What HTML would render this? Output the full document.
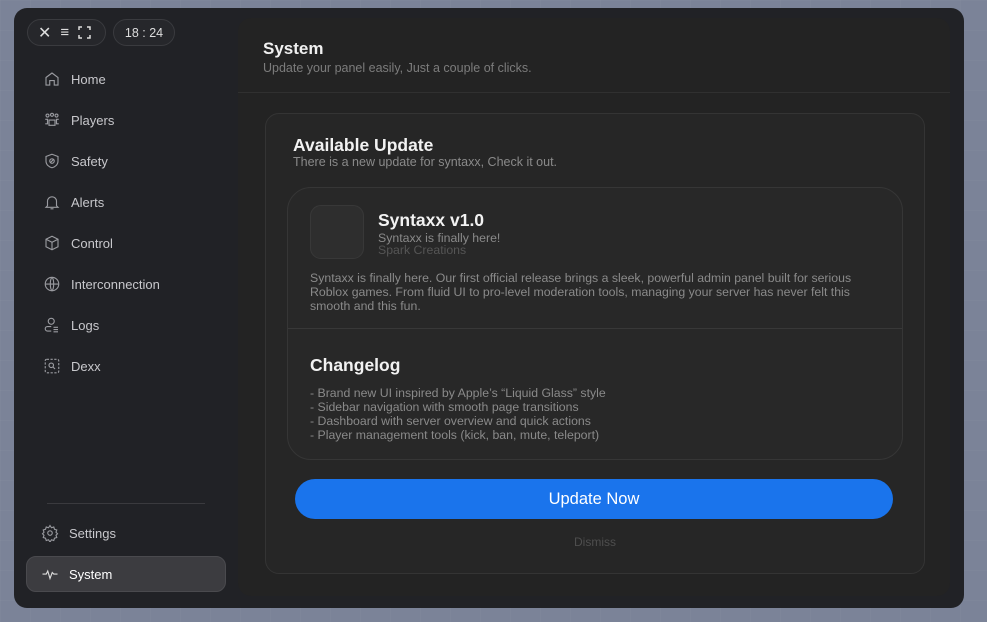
<!DOCTYPE html>
<html><head><meta charset="utf-8"><style>
*{box-sizing:border-box;margin:0;padding:0}
body{width:987px;height:622px;overflow:hidden;font-family:"Liberation Sans",sans-serif;
background:#7b8398;background-image:linear-gradient(90deg,rgba(255,255,255,.025) 1px,transparent 1px),linear-gradient(rgba(255,255,255,.025) 1px,transparent 1px);background-size:30px 30px;position:relative}
.win{position:absolute;left:14px;top:8px;width:950px;height:600px;background:#212226;border-radius:13px}
.pill{position:absolute;top:11px;height:27px;border:1px solid #3a3b3f;border-radius:14px;background:#26272b;color:#ddd;font-size:12.5px;display:flex;align-items:center;gap:9px;padding:0 10px}
.nav{position:absolute;left:29px;display:flex;align-items:center;gap:10px;color:#c8c8cc;font-size:13px}
.nav svg{width:18px;height:18px;stroke:#9a9ba0;fill:none;stroke-width:1.5}
.main{position:absolute;left:224px;top:10px;width:712px;height:578px;background:#232323;border-radius:13px;overflow:hidden}
.hdr{height:75px;border-bottom:1px solid #303030;padding:21px 0 0 25px}
.hdr h1{font-size:17px;color:#f0f0f0;font-weight:bold}
.hdr p{font-size:12.5px;color:#7c7c7c;margin-top:2px}
.card{position:absolute;left:27px;top:95px;width:660px;height:461px;border:1px solid #343434;border-radius:14px;background:#262626}
.card h2{position:absolute;left:27px;top:21px;font-size:17.5px;color:#f2f2f2;font-weight:bold}
.card .sub{position:absolute;left:27px;top:41px;font-size:12.5px;color:#8a8a8a}
.inner{position:absolute;left:21px;top:73px;width:616px;height:273px;border:1px solid #363636;border-radius:24px;background:#282828;overflow:hidden}
.icon{position:absolute;left:22px;top:17px;width:54px;height:54px;border-radius:11px;background:#2e2e2e;border:1px solid #383838}
.t{position:absolute;color:#f2f2f2;font-weight:bold}
.g{position:absolute;font-size:12.3px;color:#858585;line-height:14px}
.btn{position:absolute;left:29px;top:365px;width:598px;height:40px;border-radius:20px;background:#1a74ec;color:#fff;font-size:16.5px;display:flex;align-items:center;justify-content:center}
</style></head><body>
<div class="win">
<div class="pill" style="left:13px;width:79px"><span style="font-size:16px">✕</span><span style="font-size:15px">≡</span><svg width="13" height="13" viewBox="0 0 13 13" fill="none" stroke="#ddd" stroke-width="1.5"><path d="M1 4V1h3M9 1h3v3M12 9v3H9M4 12H1V9"/></svg></div>
<div class="pill" style="left:99px;width:62px;justify-content:center">18 : 24</div>

<div class="nav" style="top:62px"><svg viewBox="0 0 24 24"><path d="M4 10l8-6 8 6v10H15v-6H9v6H4z"/></svg>Home</div>
<div class="nav" style="top:103px"><svg viewBox="0 0 24 24"><circle cx="6" cy="6" r="2"/><circle cx="12" cy="5" r="2"/><circle cx="18" cy="6" r="2"/><path d="M8 12h8v7H8zM3 11h3v6H3M21 11h-3v6h3"/></svg>Players</div>
<div class="nav" style="top:144px"><svg viewBox="0 0 24 24"><path d="M12 3l8 3v6c0 5-4 8-8 9-4-1-8-4-8-9V6z"/><circle cx="12" cy="12" r="3"/><path d="M10 14l4-4"/></svg>Safety</div>
<div class="nav" style="top:185px"><svg viewBox="0 0 24 24"><path d="M6 17V11a6 6 0 0112 0v6l2 2H4zM10 21h4"/></svg>Alerts</div>
<div class="nav" style="top:226px"><svg viewBox="0 0 24 24"><path d="M12 3l8 4v10l-8 4-8-4V7zM4 7l8 4 8-4M12 11v10"/></svg>Control</div>
<div class="nav" style="top:267px"><svg viewBox="0 0 24 24"><circle cx="12" cy="12" r="9"/><path d="M3 12h18M12 3c3 3 3 15 0 18M12 3c-3 3-3 15 0 18"/></svg>Interconnection</div>
<div class="nav" style="top:308px"><svg viewBox="0 0 24 24"><circle cx="11" cy="7" r="4"/><path d="M11 14H6a3 3 0 000 6h5M14 15h6M14 18h6M14 21h6"/></svg>Logs</div>
<div class="nav" style="top:349px"><svg viewBox="0 0 24 24" stroke-dasharray="3 2"><rect x="3" y="3" width="18" height="18" rx="2"/><circle cx="11" cy="11" r="3" stroke-dasharray="none"/><path d="M13 13l3 3" stroke-dasharray="none"/></svg>Dexx</div>

<div style="position:absolute;left:33px;top:495px;width:158px;height:1px;background:#3a3a3e"></div>
<div class="nav" style="top:516px;left:27px"><svg viewBox="0 0 24 24"><circle cx="12" cy="12" r="3"/><path d="M12 2l2 3 3-1 1 3 3 1-1 3 2 2-2 2 1 3-3 1-1 3-3-1-2 3-2-3-3 1-1-3-3-1 1-3-2-2 2-2-1-3 3-1 1-3 3 1z"/></svg>Settings</div>
<div style="position:absolute;left:12px;top:548px;width:200px;height:36px;border-radius:10px;background:#3c3c40;border:1px solid #4a4a4e"></div>
<div class="nav" style="top:557px;left:27px;color:#fff"><svg viewBox="0 0 24 24" style="stroke:#ddd"><path d="M2 12h5l2-4 3 10 3-8 2 2h5"/></svg>System</div>

<div class="main">
<div class="hdr"><h1>System</h1><p>Update your panel easily, Just a couple of clicks.</p></div>
<div class="card">
<h2>Available Update</h2>
<div class="sub">There is a new update for syntaxx, Check it out.</div>
<div class="inner">
<div class="icon"></div>
<div class="t" style="left:90px;top:22px;font-size:17.5px">Syntaxx v1.0</div>
<div class="g" style="left:90px;top:43px;color:#8a8a8a">Syntaxx is finally here!</div>
<div class="g" style="left:90px;top:55px;color:#555">Spark Creations</div>
<div class="g" style="left:22px;top:83px;width:566px;color:#8a8a8a">Syntaxx is finally here. Our first official release brings a sleek, powerful admin panel built for serious Roblox games. From fluid UI to pro-level moderation tools, managing your server has never felt this smooth and this fun.</div>
<div style="position:absolute;left:0;top:140px;width:100%;height:1px;background:#383838"></div>
<div class="t" style="left:22px;top:167px;font-size:17.5px">Changelog</div>
<div class="g" style="left:22px;top:198px;color:#8a8a8a">- Brand new UI inspired by Apple’s “Liquid Glass” style<br>- Sidebar navigation with smooth page transitions<br>- Dashboard with server overview and quick actions<br>- Player management tools (kick, ban, mute, teleport)</div>
</div>
<div class="btn">Update Now</div>
<div style="position:absolute;left:0;width:100%;top:421px;text-align:center;font-size:12px;color:#4e4e4e">Dismiss</div>
</div>
</div>
</div>
</body></html>
